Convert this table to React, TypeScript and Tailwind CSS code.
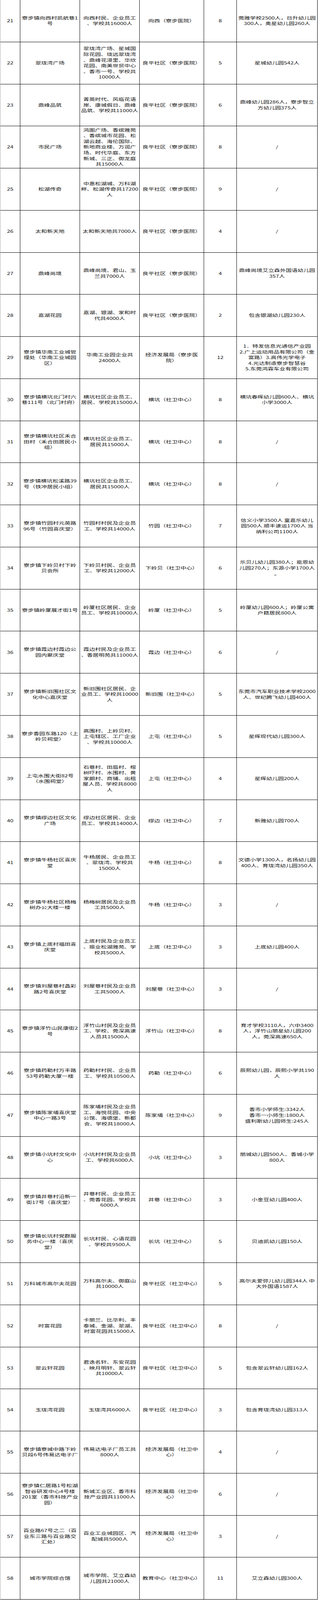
type Row = [string, string, string, string, string, string]

// 每行：序号、地点、覆盖人群、责任单位、数量、备注（\n 为原表换行位置）
const rows: Row[] = [
  ['21', '寮步镇向西村凯航巷1\n号', '向西村民、企业员工\n、学校共16000人', '向西（寮步医院）', '8', '莞雅学校2500人，日升幼儿园\n300人，奥星幼儿园260人'],
  ['22', '翠珑湾广场', '翠珑湾广场、星城国\n际花园、珑远翠珑湾\n、鼎峰花漫里、华欣\n花园、南美世贸中心\n、香市一号、学校共\n10000人', '良平社区（寮步医院）', '5', '星城幼儿园542人'],
  ['23', '鼎峰品筑', '菁英时代、风临花语\n岸、康城假日、鼎峰\n品筑、学校共11000人', '良平社区（寮步医院）', '6', '鼎峰幼儿园286人，寮步智立\n方幼儿园375人'],
  ['24', '市民广场', '鸿图广场、香缤雅苑\n、香缤城市花园、松\n湖云越、海伦国际、\n新地商业楼、万润广\n场、时代华庭、东方\n新城、三正、御龙庭\n共15000人', '良平社区（寮步医院）', '8', '/'],
  ['25', '松湖传奇', '中惠松湖城、万科湖\n畔、松湖传奇共17200\n人', '良平社区（寮步医院）', '9', '/'],
  ['26', '太和新天地', '太和新天地共7000人', '良平社区（寮步医院）', '4', '/'],
  ['27', '鼎峰尚境', '鼎峰尚境、君山、玉\n兰共7000人', '良平社区（寮步医院）', '4', '鼎峰尚境艾立森外国语幼儿园\n357人'],
  ['28', '嘉湖花园', '嘉湖、银湖、家和时\n代共4000人', '良平社区（寮步医院）', '2', '包含银湖幼儿园230人'],
  ['29', '寮步镇华南工业城管\n理处（华南工业城园\n区）', '华南工业园企业共\n24000人', '经济发展局（寮步医\n院）', '12', '1．特发信息光通信产业园\n2.广上运动用品有限公司（金\n富路）3.高伟光学电子\n4.光达制造寮步智慧谷\n5.东莞鸿霖车业有限公司'],
  ['30', '寮步镇横坑北门村六\n巷111号（北门村府）', '横坑社区企业员工、\n居民、学校共15000人', '横坑（社卫中心）', '8', '横坑春晖幼儿园600人、横坑\n小学3000人'],
  ['31', '寮步镇横坑社区禾合\n田村（禾合田居民小\n组）', '横坑社区企业员工、\n居民共15000人', '横坑（社卫中心）', '8', '/'],
  ['32', '寮步镇横坑松溪路39\n号（铁冲居民小组）', '横坑社区企业员工、\n居民共15000人', '横坑（社卫中心）', '8', '/'],
  ['33', '寮步镇竹园村元英路\n96号（竹园喜庆堂）', '竹园村村民及企业员\n工、学校共14000人', '竹园（社卫中心）', '7', '信义小学3500人 童嘉乐幼儿\n园500人 顺丰速运1700人 当\n纳利公司1100人'],
  ['34', '寮步镇下岭贝村下岭\n贝会所', '下岭贝村民、企业员\n工、学校共12000人', '下岭贝（社卫中心）', '6', '乐贝儿幼儿园380人；能恩幼\n儿园270人；东源小学1700人\n。'],
  ['35', '寮步镇岭厦展才街1号', '岭厦社区居民、企业\n员工、学校共10000人', '岭厦（社卫中心）', '5', '岭厦幼儿园600人；岭厦公寓\n户籍居民800人'],
  ['36', '寮步镇霞边村霞边公\n园内聚庆堂', '霞边村民及企业员工\n、香居明苑共11000人', '霞边（社卫中心）', '6', '/'],
  ['37', '寮步镇新旧围社区文\n化中心嘉庆堂', '新旧围社区居民、企\n业员工、学校共10000\n人', '新旧围（社卫中心）', '5', '东莞市汽车职业技术学校2000\n人、世纪腾飞幼儿园400人'],
  ['38', '寮步香园东路120（上\n岭贝祠堂）', '高围村、上岭贝村、\n上屯辖区、工厂企业\n、学校共10000人', '上屯（社卫中心）', '5', '星晖现代幼儿园300人'],
  ['39', '上屯水围大街82号\n（水围祠堂）', '石巷村、田唇村、榕\n树吓村、水围村、黄\n家朗村、商铺、出租\n屋人员、学校共8000\n人', '上屯（社卫中心）', '4', '星晖幼儿园200人'],
  ['40', '寮步镇缪边社区文化\n广场', '缪边社区居民、企业\n员工、学校共14000人', '缪边（社卫中心）', '7', '新雅幼儿园700人'],
  ['41', '寮步镇牛杨社区喜庆\n堂', '牛杨居民、企业员工\n、翠珑湾、学校共\n15000人', '牛杨（社卫中心）', '8', '文德小学1300人，名扬幼儿园\n400人、育珑湾幼儿园350人'],
  ['42', '寮步镇牛杨社区杨梅\n树办公大楼一楼', '杨梅树居民及企业员\n工共5000人', '牛杨（社卫中心）', '3', '/'],
  ['43', '寮步镇上底村福田喜\n庆堂', '上底村民及企业员工\n、振业松湖雅苑、学\n校共5000人', '上底（社卫中心）', '3', '上底幼儿园400人'],
  ['44', '寮步镇刘屋巷村蠡彩\n路2号喜庆堂', '刘屋巷村民及企业员\n工共5000人', '刘屋巷（社卫中心）', '3', '/'],
  ['45', '寮步镇浮竹山民康街2\n号', '浮竹山村民及企业员\n工、学校、莞深高速\n人员共15000人', '浮竹山（社卫中心）', '8', '育才学校3110人，六中3400\n人，浮竹山丽星幼儿园200\n人，莞深高速650人'],
  ['46', '寮步镇药勒村万丰路\n53号药勒大厦一楼', '药勒村村民、企业员\n工、学校共10500人', '药勒（社卫中心）', '6', '辰熙幼儿园，辰熙小学共190\n人'],
  ['47', '寮步镇陈家埔喜庆堂\n中心一路3号', '陈家埔村民及企业员\n工、海悦花园、中央\n公馆、海德堡、新都\n会、学校共18000人', '陈家埔（社卫中心）', '9', '香市小学师生:3342人\n香市一小师生:1800人\n盛利斯幼儿园师生:245人'],
  ['48', '寮步镇小坑村文化中\n心', '小坑村村民及企业员\n工、学校共6000人', '小坑（社卫中心）', '3', '丽城幼儿园500人、香城小学\n800人'],
  ['49', '寮步镇井巷村沿新一\n街17号（喜庆堂）', '井巷村民、企业员工\n、莞香花园、学校共\n6000人', '井巷（社卫中心）', '3', '小金豆幼儿园400人'],
  ['50', '寮步镇长坑村党群服\n务中心一楼（喜庆\n堂）', '长坑村民、心语花园\n、学校共9500人', '长坑（社卫中心）', '5', '贝迪凯幼儿园150人'],
  ['51', '万科城市高尔夫花园', '万科高尔夫、御庭山\n共10000人', '良平社区（社卫中心）', '5', '高尔夫爱弥儿幼儿园344人 中\n大外国语1587人'],
  ['52', '时富花园', '卡丽兰、比华利、丰\n泰城、金湖、翠湖、\n时富花园共15000人', '良平社区（社卫中心）', '8', '/'],
  ['53', '翠云轩花园', '君逸名轩、东安花园\n、映月明轩、翠云轩\n共10000人', '良平社区（社卫中心）', '5', '包含翠云轩幼儿园162人'],
  ['54', '玉珑湾花园', '玉珑湾共6000人', '良平社区（社卫中心）', '3', '包含育珑湾幼儿园313人'],
  ['55', '寮步镇寮城中路下岭\n贝段6号伟易达电子厂', '伟易达电子厂员工共\n8000人', '经济发展局（社卫中\n心）', '4', '/'],
  ['56', '寮步镇仁居路1号松湖\n智谷研发中心4号楼\n201室（香市科技产业\n园）', '新城工业区、香市科\n技产业园共11000人', '经济发展局（社卫中\n心）', '6', '/'],
  ['57', '百业路67号之二（百\n业东三路与百业路交\n汇处）', '百业工业城园区、汽\n配城共5000人', '经济发展局（社卫中\n心）', '3', '/'],
  ['58', '城市学院综合馆', '城市学院、艾立森幼\n儿园共21000人', '教育中心（社卫中心）', '11', '艾立森幼儿园300人'],
]

function Cell({ text }: { text: string }) {
  return (
    <div className="flex flex-col items-center justify-center border-r border-black text-center">
      {text.split('\n').map((line, i) => (
        <div key={i} className="h-[14.6px] whitespace-pre leading-[14.6px]">
          <span className="inline-block scale-y-[0.68]">{line}</span>
        </div>
      ))}
    </div>
  )
}

export default function App() {
  return (
    <div className="w-[815px] bg-white font-['Noto_Sans_CJK_SC',sans-serif] text-[15px] text-[#111]">
      <div className="w-[814px] border-l border-[#a8a8a8]">
        {rows.map((row) => (
          <div
            key={row[0]}
            className="grid h-[107.77px] grid-cols-[51px_153px_153px_165px_84px_207px] border-b border-black"
          >
            {row.map((cell, i) => (
              <Cell key={i} text={cell} />
            ))}
          </div>
        ))}
      </div>
    </div>
  )
}
